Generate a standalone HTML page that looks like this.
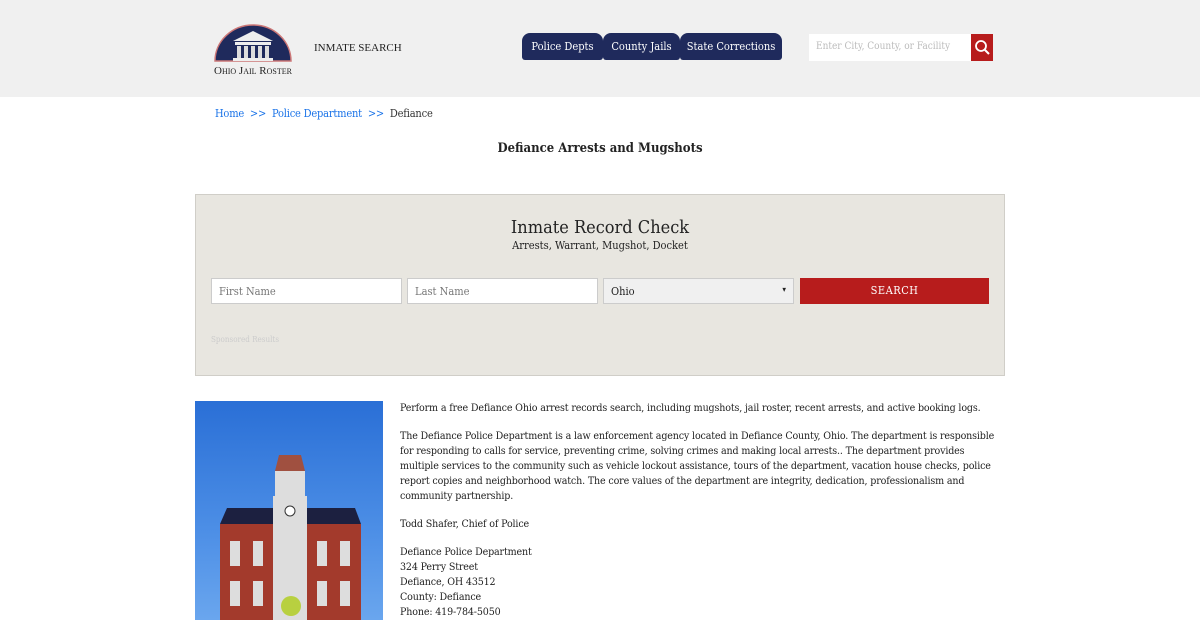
<!DOCTYPE html>
<html><head><meta charset="utf-8"><style>
*{margin:0;padding:0;box-sizing:border-box}
body{width:1200px;height:620px;overflow:hidden;background:#fff;font-family:"DejaVu Serif Condensed","DejaVu Serif","Liberation Serif",serif;color:#222}
.hdr{height:97px;background:#f0f0f0;position:relative}
.logo{position:absolute;left:207px;top:21px;width:92px}
.logo svg{display:block;margin-left:2px}
.logo .t{font-size:11px;white-space:nowrap;text-align:center;margin-top:2px;font-family:"Liberation Serif",serif;font-variant:small-caps}
.is{position:absolute;left:314px;top:42px;font-size:11px;font-family:"Liberation Serif",serif}
.tab{position:absolute;top:33px;height:27px;background:#1f2a5c;color:#fff;font-size:11px;line-height:27px;text-align:center;border-radius:8px 8px 3px 3px;white-space:nowrap}
.srch{position:absolute;left:809px;top:34px;width:162px;height:27px;background:#fff;font-size:10px;color:#bbb;padding:7px 7px;white-space:nowrap;overflow:hidden}
.sb{position:absolute;left:971px;top:34px;width:22px;height:27px;background:#b71c1c}
.bc{position:absolute;top:107px;left:215px;font-size:11px;color:#333;letter-spacing:-0.2px}
.bc a{color:#1a73e8;text-decoration:none}
h1{position:absolute;top:141px;width:1200px;text-align:center;font-size:13px;font-weight:bold;color:#222}
.box{position:absolute;left:195px;top:194px;width:810px;height:182px;background:#e8e6e0;border:1px solid #d0cec8}
.box h2{font-weight:normal;font-size:18px;text-align:center;margin-top:22px}
.box .s{text-align:center;font-size:11px;margin-top:1px}
.in{position:absolute;top:83px;height:26px;background:#fff;border:1px solid #ccc;font-size:11px;color:#777;padding:6px 7px}
.go{position:absolute;left:604px;top:83px;width:189px;height:26px;background:#b71c1c;color:#fff;font-size:11px;letter-spacing:.5px;text-align:center;line-height:26px}
.sp{position:absolute;left:15px;top:140px;font-size:8px;color:#ccc}
.img{position:absolute;left:195px;top:401px;width:188px;height:219px;background:linear-gradient(#2a6fd6,#4d8fe6 60%,#6aa6ee);overflow:hidden}
.txt{position:absolute;left:400px;top:401px;width:605px;font-size:10.6px;line-height:15px;color:#222;letter-spacing:-0.15px}
.txt p{margin-bottom:13px}
</style></head><body>
<div class="hdr">
 <div class="logo"><svg width="88" height="42" viewBox="0 0 88 42"><path d="M6 40 A38 36 0 0 1 82 40Z" fill="#1f2a5c" stroke="#c77" stroke-width="1.5"/><path d="M24 20 L44 10 L64 20Z" fill="#eee"/><rect x="26" y="21" width="36" height="3" fill="#eee"/><g fill="#ddd"><rect x="28" y="25" width="4" height="12"/><rect x="35" y="25" width="4" height="12"/><rect x="42" y="25" width="4" height="12"/><rect x="49" y="25" width="4" height="12"/><rect x="56" y="25" width="4" height="12"/></g><rect x="24" y="37" width="40" height="3" fill="#eee"/></svg><div class="t">Ohio Jail Roster</div></div>
 <div class="is">INMATE SEARCH</div>
 <div class="tab" style="left:522px;width:81px">Police Depts</div>
 <div class="tab" style="left:603px;width:77px">County Jails</div>
 <div class="tab" style="left:680px;width:102px">State Corrections</div>
 <div class="srch">Enter City, County, or Facility</div>
 <div class="sb"><svg width="22" height="27"><circle cx="10" cy="12" r="5" fill="none" stroke="#fff" stroke-width="1.8"/><path d="M14 16l4 4" stroke="#fff" stroke-width="2"/></svg></div>
</div>
<div class="bc"><a>Home</a> &nbsp;<a>&gt;&gt;</a>&nbsp; <a>Police Department</a> &nbsp;<a>&gt;&gt;</a>&nbsp; Defiance</div>
<h1>Defiance Arrests and Mugshots</h1>
<div class="box">
 <h2>Inmate Record Check</h2>
 <div class="s">Arrests, Warrant, Mugshot, Docket</div>
 <div class="in" style="left:15px;width:191px">First Name</div>
 <div class="in" style="left:211px;width:191px">Last Name</div>
 <div class="in" style="left:407px;width:191px;background:#f0f0f0;color:#222">Ohio<span style="float:right;font-size:8px">▾</span></div>
 <div class="go">SEARCH</div>
 <div class="sp">Sponsored Results</div>
</div>
<div class="img"><svg width="188" height="219" viewBox="0 0 188 219">
<path d="M80 70 L84 54 H106 L110 70Z" fill="#a05040"/><rect x="80" y="70" width="30" height="30" fill="#ddd"/>
<path d="M25 123 L32 107 H160 L166 123Z" fill="#1c2040"/>
<rect x="25" y="123" width="141" height="96" fill="#a33a2c"/>
<rect x="78" y="95" width="34" height="124" fill="#ddd"/><circle cx="95" cy="110" r="5" fill="#fff" stroke="#333"/>
<g fill="#ddd"><rect x="35" y="140" width="10" height="25"/><rect x="58" y="140" width="10" height="25"/><rect x="122" y="140" width="10" height="25"/><rect x="145" y="140" width="10" height="25"/><rect x="35" y="180" width="10" height="25"/><rect x="58" y="180" width="10" height="25"/><rect x="122" y="180" width="10" height="25"/><rect x="145" y="180" width="10" height="25"/></g>
<circle cx="96" cy="205" r="10" fill="#b8d040"/></svg></div>
<div class="txt">
<p>Perform a free Defiance Ohio arrest records search, including mugshots, jail roster, recent arrests, and active booking logs.</p>
<p>The Defiance Police Department is a law enforcement agency located in Defiance County, Ohio. The department is responsible for responding to calls for service, preventing crime, solving crimes and making local arrests.. The department provides multiple services to the community such as vehicle lockout assistance, tours of the department, vacation house checks, police report copies and neighborhood watch. The core values of the department are integrity, dedication, professionalism and community partnership.</p>
<p>Todd Shafer, Chief of Police</p>
<p>Defiance Police Department<br>324 Perry Street<br>Defiance, OH 43512<br>County: Defiance<br>Phone: 419-784-5050</p>
</div>
</body></html>
